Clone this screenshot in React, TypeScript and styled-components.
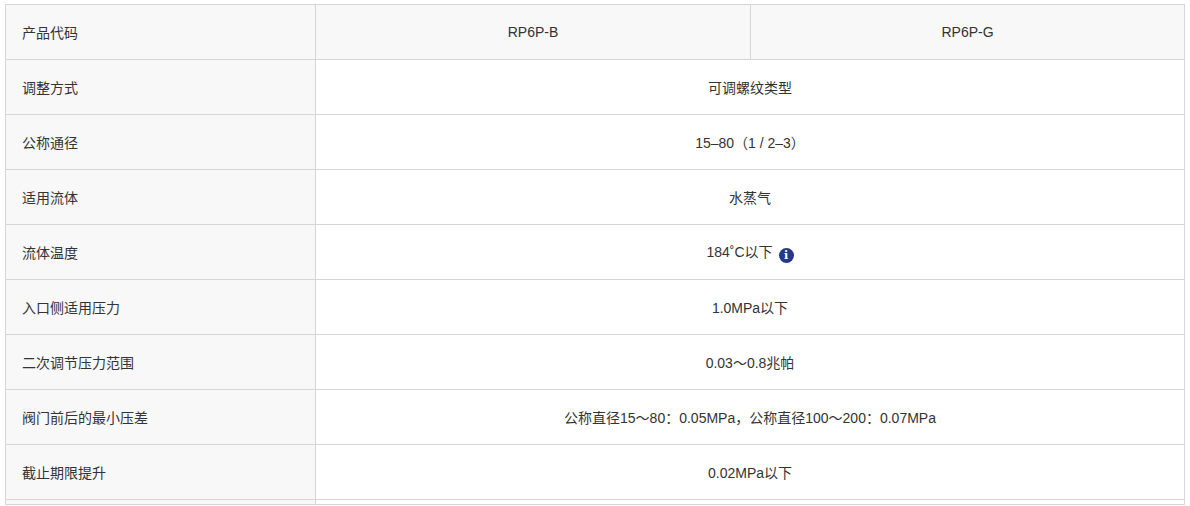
import React from "react";
import styled, { createGlobalStyle } from "styled-components";

const Global = createGlobalStyle`
  body { margin: 0; background: #fff; font-family: "Liberation Sans", Arial, "Noto Sans CJK SC", sans-serif; }
`;
const Wrap = styled.div`padding: 4px 5px 0 5px;`;
const Table = styled.table`
  width: 1180px; border-collapse: collapse; table-layout: fixed;
  font-size: 14px; color: #333;
`;
const Th = styled.td`
  border: 1px solid #d6d6d6; height: 55px; padding: 0 0 0 16px;
  background: #f8f8f8; box-sizing: border-box;
`;
const Td = styled.td<{ $head?: boolean }>`
  border: 1px solid #d6d6d6; height: 55px; text-align: center;
  background: ${p => (p.$head ? "#f8f8f8" : "#fff")}; box-sizing: border-box;
`;
const Tail = styled.tr`
  td { height: 5px; padding: 0; }
`;
const Info = styled.span`
  display: inline-block; width: 15px; height: 15px; border-radius: 50%;
  background: #233a8a; color: #fff; font-size: 11px; font-weight: bold;
  line-height: 15px; text-align: center; vertical-align: -2px; margin-left: 6px;
  font-family: "DejaVu Serif", serif;
`;

const rows: [string, React.ReactNode][] = [
  ["调整方式", "可调螺纹类型"],
  ["公称通径", "15–80（1 / 2–3）"],
  ["适用流体", "水蒸气"],
  ["流体温度", <>184˚C以下<Info>i</Info></>],
  ["入口侧适用压力", "1.0MPa以下"],
  ["二次调节压力范围", "0.03～0.8兆帕"],
  ["阀门前后的最小压差", "公称直径15～80：0.05MPa，公称直径100～200：0.07MPa"],
  ["截止期限提升", "0.02MPa以下"],
];

export default function App() {
  return (
    <Wrap>
      <Global />
      <Table>
        <colgroup>
          <col style={{ width: 310 }} />
          <col style={{ width: 435 }} />
          <col />
        </colgroup>
        <tbody>
          <tr>
            <Th>产品代码</Th>
            <Td $head>RP6P-B</Td>
            <Td $head>RP6P-G</Td>
          </tr>
          {rows.map(([k, v]) => (
            <tr key={k}>
              <Th>{k}</Th>
              <Td colSpan={2}>{v}</Td>
            </tr>
          ))}
          <Tail>
            <Th />
            <Td colSpan={2} />
          </Tail>
        </tbody>
      </Table>
    </Wrap>
  );
}
